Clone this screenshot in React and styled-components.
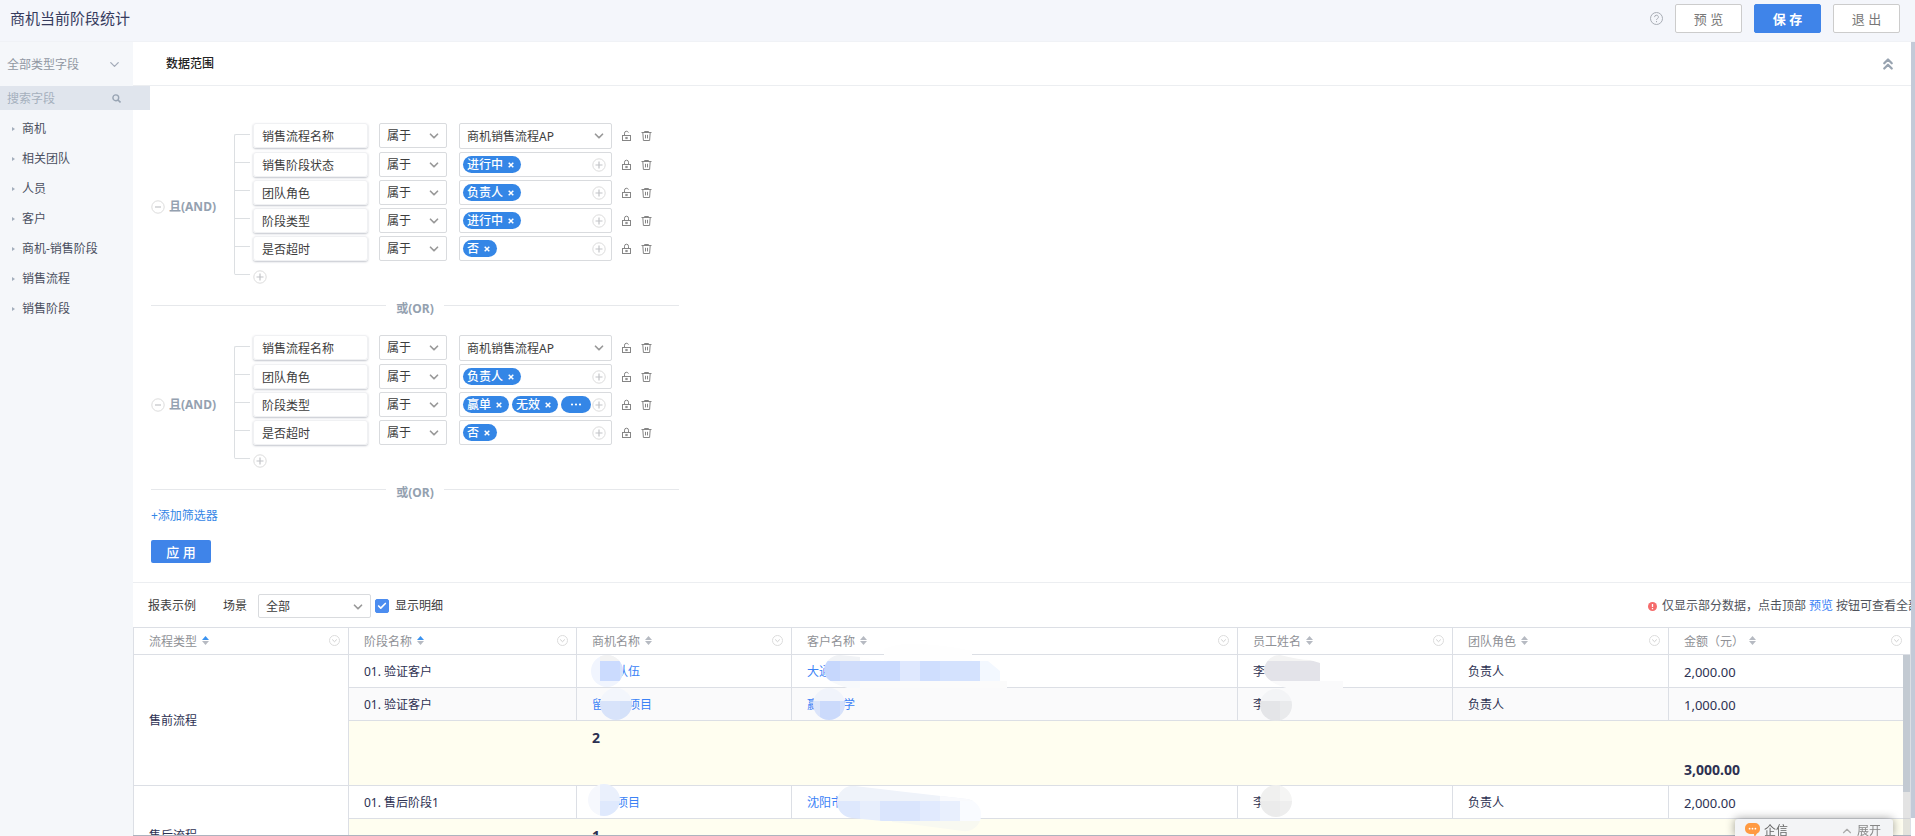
import { Fragment, useId, useState } from "react";
import styled, { createGlobalStyle } from "styled-components";
import { Check, ChevronDown, ChevronUp, ChevronsUp } from "lucide-react";

const GlobalStyle = createGlobalStyle`
  * {
    box-sizing: border-box;
  }
  body {
    margin: 0;
    overflow: hidden;
    background-color: #fff;
  }
  body, button, input, select {
    font-family: "Noto Sans", "Noto Sans CJK SC", sans-serif;
    font-size: 12px;
    line-height: 18px;
    color: #3d3d3d;
  }
  button {
    padding: 0;
    border: none;
    background: none;
    cursor: pointer;
  }
  a {
    color: #3b82f6;
    text-decoration: none;
  }
`;

const Page = styled.div`
  display: flex;
  flex-direction: column;
  height: 100vh;
`;

const Header = styled.header`
  display: flex;
  align-items: flex-start;
  gap: 12px;
  height: 42px;
  padding: 4px 15px 0 10px;
  background-color: #f4f6fb;
  border-bottom: 1px solid #f0f2f6;
`;

const HeaderTitle = styled.h1`
  flex: 1;
  margin: 0;
  font-size: 15px;
  font-weight: 400;
  line-height: 29px;
  color: #363b5e;
`;

const HelpButton = styled.button`
  display: flex;
  align-items: center;
  height: 29px;
`;

const HeaderButton = styled.button`
  width: 67px;
  height: 29px;
  border: 1px solid ${({ $primary }) => ($primary ? "#3f84e9" : "#ccc")};
  border-radius: 2px;
  background-color: ${({ $primary }) => ($primary ? "#3f84e9" : "#fff")};
  color: ${({ $primary }) => ($primary ? "#fff" : "#777")};
  font-size: 13px;
  font-weight: ${({ $primary }) => ($primary ? 700 : 400)};
`;

const Body = styled.div`
  display: flex;
  flex: 1;
  min-height: 0;
`;

const Sidebar = styled.aside`
  width: 133px;
  flex-shrink: 0;
  background-color: #f5f7fa;
`;

const TypeButton = styled.button`
  display: flex;
  align-items: center;
  justify-content: space-between;
  width: 100%;
  height: 44px;
  padding: 1px 11px 0 7px;
  color: #9197a3;
`;

const SearchBox = styled.label`
  display: flex;
  align-items: center;
  position: relative;
  z-index: 1;
  width: 150px;
  height: 24px;
  padding: 1px 0 0 7px;
  background-color: #e0e5ed;
  input {
    width: 105px;
    padding: 0;
    border: none;
    outline: none;
    background: none;
  }
  input::placeholder {
    color: #a5b0bd;
  }
`;

const FieldList = styled.ul`
  margin: 0;
  padding: 4px 0 0;
  list-style: none;
`;

const FieldItem = styled.li`
  display: flex;
  align-items: center;
  gap: 7px;
  height: 30px;
  padding-left: 12px;
  color: #4a4f60;
`;

const Arrow = styled.span`
  border: 2px solid transparent;
  border-left: 3px solid #a3aebc;
  border-right: none;
`;

const Main = styled.main`
  display: flex;
  flex-direction: column;
  flex: 1;
  min-width: 0;
`;

const PageScroll = styled.div`
  width: 4px;
  padding-bottom: 18px;
  background-color: #fff;
`;

const PageThumb = styled.div`
  height: 100%;
  background-color: #c3cad8;
`;

const SectionHead = styled.div`
  display: flex;
  align-items: center;
  justify-content: space-between;
  height: 44px;
  padding: 0 14px 0 33px;
  border-bottom: 1px solid #eceef1;
  h2 {
    margin: 0;
    font-size: 12px;
    font-weight: 500;
    color: #222;
  }
  button {
    display: flex;
  }
`;

const Filters = styled.section`
  padding: 37px 18px 19px;
  border-bottom: 1px solid #eceef1;
`;

const Group = styled.div`
  display: flex;
`;

const GroupLabel = styled.div`
  display: flex;
  align-items: center;
  gap: 4px;
  width: 83px;
  padding-top: 8px;
  font-weight: 700;
  color: #94a1b0;
`;

const Bracket = styled.div`
  display: flex;
  flex-direction: column;
  width: 16px;
  margin: 11px 3px 8px 0;
  border: 1px solid #dcdfe2;
  border-width: 1px 0 0 1px;
  border-radius: 2px 0 0 2px;
  span {
    flex: 1;
    border-bottom: 1px solid #dcdfe2;
  }
`;

const Rows = styled.div`
  display: flex;
  flex-direction: column;
`;

const RowList = styled.div`
  display: flex;
  flex-direction: column;
  gap: 3px;
  margin-bottom: 3px;
`;

const Row = styled.div`
  display: flex;
  align-items: flex-start;
  min-height: 25px;
`;

const FieldCard = styled.div`
  width: 115px;
  height: 25px;
  margin-right: 11px;
  padding: 1px 8px 0;
  border: 1px solid #f0f1f3;
  border-radius: 3px;
  box-shadow: 0 1px 2px rgba(80, 90, 110, 0.35);
  line-height: 23px;
`;

const SelectWrap = styled.div`
  position: relative;
  width: ${({ $width }) => $width}px;
  height: ${({ $height }) => $height}px;
  select {
    width: 100%;
    height: 100%;
    padding: 1px 20px 0 7px;
    border: 1px solid #d9dbde;
    border-radius: 2px;
    background-color: #fff;
    appearance: none;
    outline: none;
  }
  svg {
    position: absolute;
    top: 6px;
    right: 6px;
    pointer-events: none;
  }
`;

const ValueCell = styled.div`
  width: 153px;
  margin: 0 9px 0 12px;
`;

const TagBox = styled.div`
  display: flex;
  align-items: center;
  gap: 3px;
  height: 25px;
  padding: 0 5px 0 3px;
  border: 1px solid #d9dbde;
  border-radius: 2px;
`;

const Tag = styled.span`
  display: flex;
  flex-shrink: 0;
  align-items: center;
  gap: 5px;
  height: 17px;
  padding: 0 7px 0 4px;
  border-radius: 9px;
  background-color: #3486e6;
  color: #fff;
  font-weight: 500;
  line-height: 17px;
  white-space: nowrap;
  button {
    display: flex;
  }
`;

const MoreTag = styled.button`
  display: flex;
  flex-shrink: 0;
  align-items: center;
  justify-content: center;
  width: 30px;
  height: 17px;
  margin-right: -3px;
  border-radius: 9px;
  background-color: #3486e6;
`;

const CircleButton = styled.button`
  display: flex;
  flex-shrink: 0;
  margin-left: ${({ $end }) => ($end ? "auto" : "0")};
`;

const AddRow = styled.div`
  display: flex;
  height: 19px;
  padding-top: 6px;
`;

const IconButton = styled.button`
  display: flex;
  align-items: center;
  width: 20px;
  height: 25px;
`;

const OrDivider = styled.div`
  display: flex;
  gap: 10px;
  width: 528px;
  padding-top: 17px;
  font-weight: 700;
  color: #94a1b0;
  & + ${Group} {
    margin-top: 17px;
  }
  &::before,
  &::after {
    content: "";
    flex: 1;
    height: 1px;
    margin-top: 5px;
    background-color: #e6e8eb;
  }
`;

const AddFilter = styled.button`
  display: block;
  margin-top: 5px;
  color: #3486e6;
`;

const ApplyButton = styled.button`
  display: block;
  width: 60px;
  height: 23px;
  padding-top: 1px;
  margin-top: 15px;
  border-radius: 2px;
  background-color: #3f84e9;
  color: #fff;
  font-size: 13px;
  font-weight: 500;
`;

const Toolbar = styled.div`
  display: flex;
  align-items: center;
  height: 44px;
  padding: 2px 0 0 15px;
`;

const SceneLabel = styled.label`
  margin: 0 11px 0 27px;
`;

const CheckLabel = styled.label`
  display: flex;
  align-items: center;
  gap: 6px;
  position: relative;
  margin-left: 4px;
  input {
    width: 14px;
    height: 14px;
    margin: 0;
    border-radius: 2px;
    appearance: none;
    border: 1px solid #4c8df0;
  }
  input:checked {
    background-color: #4c8df0;
  }
  svg {
    position: absolute;
    left: 2px;
    pointer-events: none;
  }
`;

const Notice = styled.p`
  display: flex;
  align-items: center;
  width: 263px;
  margin: 0 0 0 auto;
  overflow: hidden;
  white-space: nowrap;
  color: #50535c;
  svg {
    flex-shrink: 0;
    margin-right: 5px;
  }
  a {
    margin: 0 3px;
  }
`;

const Report = styled.section`
  position: relative;
  flex: 1;
  min-height: 0;
  overflow: hidden;
  border-bottom: 1px solid #adb3bf;
`;

const ReportTable = styled.table`
  width: 100%;
  table-layout: fixed;
  border-spacing: 0;
  border: 1px solid #dcdfe5;
  border-width: 1px 0 0 1px;
  color: #2d3152;
`;

const HeadCell = styled.th`
  height: 27px;
  padding: 1px 8px 0 15px;
  border: 1px solid #dcdfe5;
  border-width: 0 1px 1px 0;
  font-weight: 400;
  color: #8f9196;
  div {
    display: flex;
    align-items: center;
    gap: 5px;
  }
  div > :last-child {
    margin-left: auto;
  }
`;

const Cell = styled.td`
  position: relative;
  height: 33px;
  padding: 2px 15px 0;
  border: 1px solid #dcdfe5;
  border-width: 0 1px 1px 0;
  background-color: ${({ $striped }) => ($striped ? "#fafafb" : "#fff")};
  white-space: nowrap;
  font-size: ${({ $number }) => ($number ? 13 : 12)}px;
  > svg {
    position: absolute;
    top: 0;
    left: 0;
    overflow: visible;
    pointer-events: none;
  }
`;

const TotalCell = styled.td`
  height: 65px;
  padding: 8px 15px 6px;
  border-bottom: 1px solid #dcdfe5;
  border-right: ${({ $last }) => ($last ? "1px solid #dcdfe5" : "none")};
  background-color: #fffef0;
  vertical-align: ${({ $last }) => ($last ? "bottom" : "top")};
  font-size: 14px;
  font-weight: 700;
`;

const TableTrack = styled.div`
  position: absolute;
  top: 28px;
  right: 1px;
  bottom: 0;
  width: 7px;
  background-color: rgba(200, 200, 200, 0.5);
`;

const TableThumb = styled.div`
  height: 137px;
  background-color: #c3cad2;
`;

const ChatBar = styled.div`
  position: fixed;
  right: 22px;
  bottom: 0;
  z-index: 2;
  display: flex;
  align-items: flex-start;
  width: 158px;
  height: 17px;
  padding: 3px 12px 0 10px;
  clip-path: inset(-12px -12px 0 -12px);
  border-radius: 3px 3px 0 0;
  background-color: #f3f4f6;
  box-shadow: 0 0 10px rgba(0, 0, 0, 0.4);
  color: #666;
  button {
    display: flex;
    align-items: center;
    gap: 3px;
    margin-left: auto;
    color: #888;
  }
  > svg {
    margin-right: 4px;
  }
`;

const HelpIcon = () => (
  <svg width="13" height="13" viewBox="0 0 13 13" fill="none" stroke="#a9adb5">
    <circle cx="6.5" cy="6.5" r="6" />
    <path d="M4.6 5.1a1.9 1.9 0 1 1 2.8 1.6c-.6.4-.9.7-.9 1.3M6.5 9v1.2" />
  </svg>
);

const SearchIcon = () => (
  <svg width="9" height="9" viewBox="0 0 9 9" fill="none" stroke="#98a4b3">
    <circle cx="3.8" cy="3.8" r="2.9" strokeWidth="1.4" />
    <path d="M6 6l2.5 2.5" strokeWidth="1.6" />
  </svg>
);

const CircleIcon = ({ plus }) => (
  <svg width="14" height="14" viewBox="0 0 14 14" fill="none">
    <circle cx="7" cy="7" r="6.2" stroke="#dcdcdc" />
    <path d={plus ? "M3.5 7h7M7 3.5v7" : "M4 7h6"} stroke="#c2c4c7" strokeWidth="1.2" />
  </svg>
);

const CloseIcon = () => (
  <svg width="6" height="6" viewBox="0 0 6 6" stroke="#fff" strokeWidth="1.5">
    <path d="M.7.7l4.6 4.6M5.3.7L.7 5.3" />
  </svg>
);

const DotsIcon = () => (
  <svg width="12" height="3" viewBox="0 0 12 3" fill="#fff">
    <circle cx="2" cy="1.5" r="1.1" />
    <circle cx="6" cy="1.5" r="1.1" />
    <circle cx="10" cy="1.5" r="1.1" />
  </svg>
);

const LockIcon = ({ open }) => (
  <svg width="11" height="12" viewBox="0 0 11 12" fill="none" stroke="#858585">
    <rect x="1.5" y="5.5" width="8" height="5" />
    <path d={open ? "M3.5 5.5V3.2a2 2 0 0 1 3.9-.6" : "M3.5 5.5V3.2a2 2 0 0 1 4 0v2.3"} />
    <rect x="4.8" y="7.3" width="1.4" height="1.4" strokeWidth=".8" />
  </svg>
);

const TrashIcon = () => (
  <svg width="11" height="12" viewBox="0 0 11 12" fill="none" stroke="#858585">
    <path d="M.5 2.5h10M3.5 2.5v-1h4v1M1.8 2.5l.6 8h6.2l.6-8M4.5 4.8v3.6M6.5 4.8v3.6" />
  </svg>
);

const SortIcon = ({ active }) => (
  <svg width="7" height="12" viewBox="0 0 7 12">
    <path d="M3.5 0L7 4H0z" fill={active ? "#3b93f0" : "#b6bac2"} />
    <path d="M3.5 9L7 5H0z" fill="#b6bac2" />
  </svg>
);

const MenuIcon = () => (
  <svg width="11" height="13" viewBox="0 0 11 13" fill="none">
    <circle cx="5.5" cy="5.5" r="5" stroke="#dcdcdc" />
    <path d="M3.2 4.5l2.3 2.2 2.3-2.2" stroke="#cfcfcf" />
  </svg>
);

const WarnIcon = () => (
  <svg width="9" height="9" viewBox="0 0 9 9">
    <circle cx="4.5" cy="4.5" r="4.5" fill="#f56c6c" />
    <path d="M4.5 2v3M4.5 6v1.2" stroke="#fff" strokeWidth="1.3" />
  </svg>
);

const ChatIcon = () => (
  <svg width="15" height="15" viewBox="0 0 15 15">
    <path d="M5 1h5a5 5 0 0 1 5 5v1a5 5 0 0 1-3 4.6L9.500 15l-.5-3H5a5 5 0 0 1-5-5V6a5 5 0 0 1 5-5z" fill="#ff9a42" />
    <g fill="#fff">
      <circle cx="4.600" cy="6.700" r=".9" />
      <circle cx="7.500" cy="6.700" r=".9" />
      <circle cx="10.400" cy="6.700" r=".9" />
    </g>
  </svg>
);

// 脱敏马赛克: path 为涂抹区域, tiles 为 [x, y, w, h, color]
const Mosaic = ({ path, tiles }) => {
  const id = useId();
  return (
    <svg width="1" height="1" shapeRendering="crispEdges" aria-hidden="true">
      <clipPath id={id}>
        <path d={path} />
      </clipPath>
      <g clipPath={`url(#${id})`}>
        {tiles.map(([x, y, w, h, color], index) => (
          <rect key={index} x={x} y={y} width={w} height={h} fill={color} />
        ))}
      </g>
    </svg>
  );
};

const dot = (cx, cy) => `M${cx - 16} ${cy}a16 16 0 1 1 32 0a16 16 0 1 1 -32 0z`;

const fields = ["商机", "相关团队", "人员", "客户", "商机-销售阶段", "销售流程", "销售阶段"];

const groups = [
  [
    { name: "销售流程名称", select: "商机销售流程AP", open: true },
    { name: "销售阶段状态", tags: ["进行中"] },
    { name: "团队角色", tags: ["负责人"], open: true },
    { name: "阶段类型", tags: ["进行中"] },
    { name: "是否超时", tags: ["否"] },
  ],
  [
    { name: "销售流程名称", select: "商机销售流程AP", open: true },
    { name: "团队角色", tags: ["负责人"], open: true },
    { name: "阶段类型", tags: ["赢单", "无效"], more: true },
    { name: "是否超时", tags: ["否"] },
  ],
];

const columns = [
  { title: "流程类型", width: 215, sorted: true },
  { title: "阶段名称", width: 228, sorted: true },
  { title: "商机名称", width: 215 },
  { title: "客户名称" },
  { title: "员工姓名", width: 215 },
  { title: "团队角色", width: 216 },
  { title: "金额（元）", width: 242 },
];

const report = [
  {
    type: "售前流程",
    count: 2,
    total: "3,000.00",
    rows: [
      {
        stage: "01. 验证客户",
        deal: "　　队伍",
        dealMask: {
          path: dot(30, 16),
          tiles: [
            [14, 0, 33, 32, "#f1f5fe"],
            [23, 0, 24, 6, "#f3f3f3"],
            [23, 6, 20, 20, "#cbdbfe"],
            [43, 6, 4, 20, "#d6e3fc"],
          ],
        },
        customer: "大通",
        customerMask: {
          path: "M32 16a16 16 0 0 1 16 -16L68 2L92 6V-6Q104 -12 130 -11Q160 -9 180 -4V6H196L208 16V26H215V33H68V36Q40 30 34 22z",
          tiles: [
            [32, -12, 183, 18, "#fefefe"],
            [32, 0, 36, 6, "#f1f3f6"],
            [32, 26, 36, 11, "#f7f9fc"],
            [68, 26, 147, 8, "#fbfbfb"],
            [32, 6, 16, 20, "#c6d7fd"],
            [48, 6, 20, 20, "#cfdcfb"],
            [68, 6, 40, 20, "#cbdbfe"],
            [108, 6, 20, 20, "#cfdefe"],
            [108, 6, 20, 20, "#dfe8fe"],
            [128, 6, 20, 20, "#cfdefe"],
            [148, 6, 40, 20, "#d4e2fe"],
            [188, 6, 20, 20, "#f3f8ff"],
          ],
        },
        staff: "李",
        staffMask: {
          path: "M26 16a16 16 0 0 1 16 -16Q62 5 72 5L82 8V26H105V33H62V36Q28 30 26 16z",
          tiles: [
            [26, 0, 60, 6, "#f3f3f3"],
            [26, 6, 56, 20, "#e3e3e9"],
            [26, 26, 80, 11, "#fafafb"],
          ],
        },
        amount: "2,000.00",
      },
      {
        stage: "01. 验证客户",
        deal: "留　　项目",
        dealMask: {
          path: dot(39, 16),
          tiles: [
            [23, 0, 32, 13, "#f3f6fc"],
            [23, 13, 20, 20, "#d8e3fa"],
            [43, 13, 20, 20, "#d4e1f9"],
          ],
        },
        customer: "赢　　学",
        customerMask: {
          path: dot(37, 16),
          tiles: [
            [20, 0, 34, 13, "#f1f4fb"],
            [20, 13, 8, 20, "#dbe4fa"],
            [28, 13, 20, 20, "#cbdafb"],
            [48, 13, 8, 20, "#d6e1fa"],
          ],
        },
        staff: "李",
        staffMask: {
          path: dot(38, 17),
          tiles: [
            [22, 1, 32, 12, "#f3f4f6"],
            [22, 13, 20, 20, "#e4e5e8"],
            [42, 13, 12, 20, "#e9eaec"],
          ],
        },
        amount: "1,000.00",
      },
    ],
  },
  {
    type: "售后流程",
    count: 1,
    total: "2,000.00",
    rows: [
      {
        stage: "01. 售后阶段1",
        deal: "　　项目",
        dealMask: {
          path: dot(27, 14),
          tiles: [
            [11, -2, 12, 34, "#f6f8fd"],
            [23, -2, 20, 17, "#eaf0fc"],
            [23, 15, 20, 20, "#dfe9fd"],
          ],
        },
        customer: "沈阳市",
        customerMask: {
          path: "M45 16a16 16 0 0 1 18 -16L105 5L175 13A16 16 0 1 1 171 45L110 37L60 32A16 16 0 0 1 45 16z",
          tiles: [
            [45, 0, 146, 15, "#eff3fa"],
            [45, 15, 23, 20, "#dee8fd"],
            [68, 15, 20, 20, "#e7eefc"],
            [88, 15, 40, 20, "#dae5fd"],
            [128, 15, 20, 20, "#e1eafe"],
            [148, 15, 20, 20, "#e8effd"],
            [148, 0, 50, 15, "#f9fafd"],
            [168, 15, 26, 20, "#f9fbff"],
            [100, 35, 94, 11, "#f8f9f1"],
          ],
        },
        staff: "李",
        staffMask: {
          path: dot(38, 15),
          tiles: [
            [22, -1, 20, 16, "#f0f0ef"],
            [42, -1, 12, 16, "#f5f5f4"],
            [22, 15, 20, 17, "#ebebeb"],
            [42, 15, 12, 17, "#eeeeee"],
          ],
        },
        amount: "2,000.00",
      },
    ],
  },
];

function SelectBox({ id, label, options, width, height }) {
  return (
    <SelectWrap $width={width} $height={height}>
      <select id={id} aria-label={label}>
        {options.map((option) => (
          <option key={option}>{option}</option>
        ))}
      </select>
      <ChevronDown size={14} color="#999" strokeWidth={3} />
    </SelectWrap>
  );
}

function FilterRow({ row }) {
  return (
    <Row>
      <FieldCard>{row.name}</FieldCard>
      <SelectBox label={`${row.name}条件`} options={["属于"]} width={68} height={25} />
      <ValueCell>
        {row.select ? (
          <SelectBox label={row.name} options={[row.select]} width={153} height={26} />
        ) : (
          <TagBox>
            {row.tags.map((tag) => (
              <Tag key={tag}>
                {tag}
                <button aria-label={`移除${tag}`}>
                  <CloseIcon />
                </button>
              </Tag>
            ))}
            {row.more && (
              <MoreTag aria-label="更多">
                <DotsIcon />
              </MoreTag>
            )}
            <CircleButton $end aria-label="添加值">
              <CircleIcon plus />
            </CircleButton>
          </TagBox>
        )}
      </ValueCell>
      <IconButton aria-label="锁定">
        <LockIcon open={row.open} />
      </IconButton>
      <IconButton aria-label="删除">
        <TrashIcon />
      </IconButton>
    </Row>
  );
}

function FilterGroup({ rows }) {
  return (
    <Group>
      <GroupLabel>
        <CircleButton aria-label="收起">
          <CircleIcon />
        </CircleButton>
        <span>且(AND)</span>
      </GroupLabel>
      <Bracket>
        {rows.map((row) => (
          <span key={row.name} />
        ))}
      </Bracket>
      <Rows>
        <RowList>
          {rows.map((row) => (
            <FilterRow key={row.name} row={row} />
          ))}
        </RowList>
        <AddRow>
          <CircleButton aria-label="添加条件">
            <CircleIcon plus />
          </CircleButton>
        </AddRow>
      </Rows>
    </Group>
  );
}

export default function App() {
  const [showDetail, setShowDetail] = useState(true);

  return (
    <>
      <GlobalStyle />
      <Page>
        <Header>
          <HeaderTitle>商机当前阶段统计</HeaderTitle>
          <HelpButton aria-label="帮助">
            <HelpIcon />
          </HelpButton>
          <HeaderButton>预 览</HeaderButton>
          <HeaderButton $primary>保 存</HeaderButton>
          <HeaderButton>退 出</HeaderButton>
        </Header>
        <Body>
          <Sidebar>
            <TypeButton>
              全部类型字段
              <ChevronDown size={15} color="#a3abb8" strokeWidth={2} />
            </TypeButton>
            <SearchBox>
              <input type="text" placeholder="搜索字段" aria-label="搜索字段" />
              <SearchIcon />
            </SearchBox>
            <FieldList>
              {fields.map((field) => (
                <FieldItem key={field}>
                  <Arrow />
                  {field}
                </FieldItem>
              ))}
            </FieldList>
          </Sidebar>
          <Main>
            <SectionHead>
              <h2>数据范围</h2>
              <button aria-label="收起数据范围">
                <ChevronsUp size={18} color="#98a3b0" strokeWidth={3} />
              </button>
            </SectionHead>
            <Filters>
              {groups.map((rows, index) => (
                <Fragment key={index}>
                  <FilterGroup rows={rows} />
                  <OrDivider>或(OR)</OrDivider>
                </Fragment>
              ))}
              <AddFilter>+添加筛选器</AddFilter>
              <ApplyButton>应 用</ApplyButton>
            </Filters>
            <Toolbar>
              <span>报表示例</span>
              <SceneLabel htmlFor="scene">场景</SceneLabel>
              <SelectBox id="scene" options={["全部"]} width={113} height={24} />
              <CheckLabel>
                <input
                  type="checkbox"
                  checked={showDetail}
                  onChange={(e) => setShowDetail(e.target.checked)}
                />
                <Check size={10} color="#fff" strokeWidth={4} />
                显示明细
              </CheckLabel>
              <Notice>
                <WarnIcon />
                仅显示部分数据，点击顶部<a href="#preview">预览</a>按钮可查看全部数据
              </Notice>
            </Toolbar>
            <Report>
              <ReportTable>
                <colgroup>
                  {columns.map((column) => (
                    <col key={column.title} width={column.width} />
                  ))}
                </colgroup>
                <thead>
                  <tr>
                    {columns.map((column) => (
                      <HeadCell key={column.title}>
                        <div>
                          {column.title}
                          <SortIcon active={column.sorted} />
                          <MenuIcon />
                        </div>
                      </HeadCell>
                    ))}
                  </tr>
                </thead>
                {report.map((group) => (
                  <tbody key={group.type}>
                    {group.rows.map((row, index) => (
                      <tr key={index}>
                        {index === 0 && <Cell rowSpan={group.rows.length + 1}>{group.type}</Cell>}
                        <Cell $striped={index % 2}>{row.stage}</Cell>
                        <Cell $striped={index % 2}>
                          <a href="#deal">{row.deal}</a>
                          <Mosaic {...row.dealMask} />
                        </Cell>
                        <Cell $striped={index % 2}>
                          <a href="#customer">{row.customer}</a>
                          <Mosaic {...row.customerMask} />
                        </Cell>
                        <Cell $striped={index % 2}>
                          {row.staff}
                          <Mosaic {...row.staffMask} />
                        </Cell>
                        <Cell $striped={index % 2}>负责人</Cell>
                        <Cell $striped={index % 2} $number>
                          {row.amount}
                        </Cell>
                      </tr>
                    ))}
                    <tr>
                      <TotalCell />
                      <TotalCell>{group.count}</TotalCell>
                      <TotalCell />
                      <TotalCell />
                      <TotalCell />
                      <TotalCell $last>{group.total}</TotalCell>
                    </tr>
                  </tbody>
                ))}
              </ReportTable>
              <TableTrack>
                <TableThumb />
              </TableTrack>
            </Report>
          </Main>
          <PageScroll>
            <PageThumb />
          </PageScroll>
        </Body>
        <ChatBar>
          <ChatIcon />
          企信
          <button>
            <ChevronUp size={14} color="#aaa" strokeWidth={2} />
            展开
          </button>
        </ChatBar>
      </Page>
    </>
  );
}
